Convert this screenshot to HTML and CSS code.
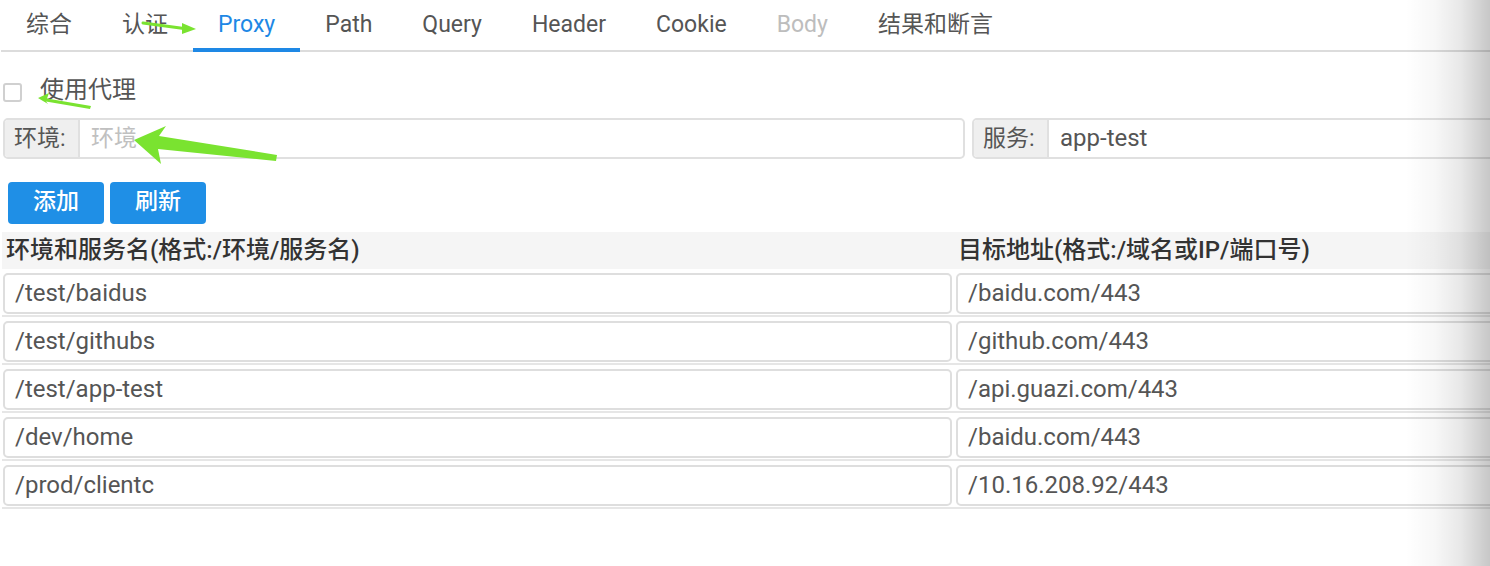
FILE: index.html
```html
<!DOCTYPE html>
<html lang="zh">
<head>
<meta charset="utf-8">
<title>Proxy</title>
<link rel="stylesheet" href="styles.css">
</head>
<body>
<div class="page">
  <nav class="tabs">
    <span class="tab">综合</span>
    <span class="tab">认证</span>
    <span class="tab active">Proxy</span>
    <span class="tab">Path</span>
    <span class="tab">Query</span>
    <span class="tab">Header</span>
    <span class="tab">Cookie</span>
    <span class="tab disabled">Body</span>
    <span class="tab">结果和断言</span>
  </nav>
  <div class="panel">
    <label class="check-row"><span class="checkbox"></span><span class="check-label">使用代理</span></label>
    <div class="filters">
      <div class="input-group"><span class="addon">环境:</span><span class="field placeholder">环境</span></div>
      <div class="input-group"><span class="addon">服务:</span><span class="field">app-test</span></div>
    </div>
    <div class="actions">
      <button class="btn">添加</button>
      <button class="btn">刷新</button>
    </div>
    <div class="table">
      <div class="thead">
        <div class="th">环境和服务名(格式:/环境/服务名)</div>
        <div class="th th2">目标地址(格式:/域名或IP/端口号)</div>
      </div>
      <div class="row"><div class="cell">/test/baidus</div><div class="cell">/baidu.com/443</div></div>
      <div class="row"><div class="cell">/test/githubs</div><div class="cell">/github.com/443</div></div>
      <div class="row"><div class="cell">/test/app-test</div><div class="cell">/api.guazi.com/443</div></div>
      <div class="row"><div class="cell">/dev/home</div><div class="cell">/baidu.com/443</div></div>
      <div class="row"><div class="cell">/prod/clientc</div><div class="cell">/10.16.208.92/443</div></div>
    </div>
  </div>
  <div class="edge-shade"></div>
  <svg class="annot" width="1490" height="566" viewBox="0 0 1490 566">
    <line x1="143" y1="23" x2="184" y2="28.5" stroke="#7ae330" stroke-width="3" stroke-linecap="round"/>
    <polygon points="182,23 196,29 182,34" fill="#7ae330"/>
    <polygon points="38,98 49,93 47,98.5 91,106 90,109 46,101.5 48,104" fill="#7ae330"/>
    <polygon points="134,140 166,126 159,136 277,155 276,161 158,149 161,164" fill="#7ae330"/>
  </svg>
</div>
</body>
</html>
```

FILE: styles.css
```css
html, body {
  margin: 0;
  padding: 0;
  overflow: hidden;
  background: #fff;
}
body {
  font-family: Roboto, "Noto Sans CJK SC", sans-serif;
  color: #555;
}
.page {
  position: relative;
  width: 1940px;
  height: 566px;
}
.tabs {
  display: flex;
  margin-left: 1px;
  border-bottom: 2px solid #dcdcdc;
}
.tab {
  padding: 2px 25px 0;
  line-height: 46px;
  font-size: 23px;
  color: #555;
  border-bottom: 4px solid transparent;
  margin-bottom: -2px;
  white-space: nowrap;
}
.tab.active {
  color: #1e88e5;
  border-bottom-color: #1e88e5;
}
.tab.disabled {
  color: #bdbdbd;
}
.panel {
  padding-left: 3px;
}
.check-row {
  display: flex;
  align-items: flex-start;
  margin-top: 26px;
}
.checkbox {
  box-sizing: border-box;
  width: 19px;
  height: 19px;
  margin-top: 5px;
  border: 2px solid #d0d0d0;
  border-radius: 3px;
  background: #fff;
}
.check-label {
  margin-left: 18px;
  font-size: 24px;
  line-height: 24px;
  color: #555;
}
.filters {
  display: flex;
  gap: 7px;
  margin-top: 16px;
}
.input-group {
  box-sizing: border-box;
  display: flex;
  width: 962px;
  height: 41px;
  border: 2px solid #e0e0e0;
  border-radius: 5px;
  overflow: hidden;
}
.addon {
  box-sizing: border-box;
  width: 75px;
  padding-left: 9px;
  background: #efefef;
  border-right: 2px solid #e0e0e0;
  font-size: 23px;
  line-height: 37px;
  color: #555;
}
.field {
  flex: 1;
  padding-left: 11px;
  font-size: 24px;
  line-height: 37px;
  color: #555;
}
.field.placeholder {
  font-size: 23px;
  color: #c0c0c0;
}
.actions {
  display: flex;
  gap: 6px;
  margin-top: 23px;
  padding-left: 5px;
}
.btn {
  width: 96px;
  height: 42px;
  border: none;
  border-radius: 4px;
  background: #1f8fe6;
  color: #fff;
  font-family: Roboto, "Noto Sans CJK SC", sans-serif;
  font-size: 23px;
  font-weight: 500;
  line-height: 39px;
  padding: 0 0 3px;
}
.table {
  margin-top: 8px;
  margin-left: -1px;
  width: 1910px;
}
.thead {
  display: grid;
  grid-template-columns: 949px 1fr;
  gap: 4px;
  height: 37px;
  background: #f5f5f5;
}
.th {
  padding-left: 4px;
  font-size: 24px;
  font-weight: 500;
  line-height: 36px;
  color: #333;
  white-space: nowrap;
}
.th2 {
  padding-left: 3px;
}
.row {
  display: grid;
  grid-template-columns: 949px 1fr;
  gap: 4px;
  padding: 4px 0 1px 1px;
  border-bottom: 2px solid #e6e6e6;
}
.cell {
  box-sizing: border-box;
  height: 41px;
  border: 2px solid #dedede;
  border-radius: 5px;
  padding-left: 10px;
  font-size: 24px;
  line-height: 36px;
  color: #555;
}
.edge-shade {
  position: absolute;
  top: 0;
  left: 1405px;
  width: 85px;
  height: 566px;
  background: linear-gradient(to right, rgba(0,0,0,0) 0%, rgba(0,0,0,0.03) 35%, rgba(0,0,0,0.09) 65%, rgba(0,0,0,0.22) 100%);
  pointer-events: none;
}
.annot {
  position: absolute;
  top: 0;
  left: 0;
  pointer-events: none;
}
```
